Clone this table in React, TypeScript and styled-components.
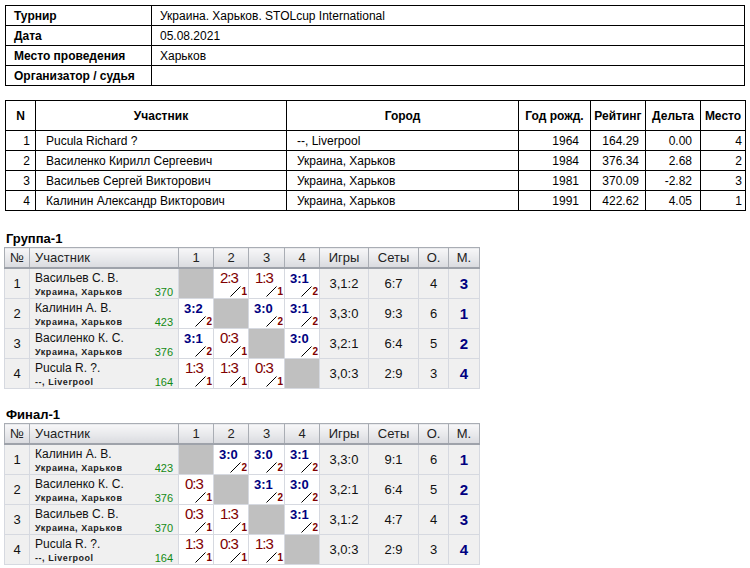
import React from "react";
import styled, { createGlobalStyle } from "styled-components";

const Global = createGlobalStyle`
  html, body { margin: 0; padding: 0; background: #fff; }
  body { padding: 5px 0 0 5px; font-family: "Liberation Sans", Arial, sans-serif; color: #000; }
`;

const Page = styled.div`
  display: flex;
  flex-direction: column;
  align-items: flex-start;
`;

const InfoTable = styled.table`
  border-collapse: collapse;
  width: 740px;
  table-layout: fixed;
  font-size: 12px;
  td {
    border: 1px solid #000;
    height: 19px;
    padding: 0 0 0 8px;
    white-space: nowrap;
  }
`;

const InfoLabel = styled.td`
  width: 137px;
  font-weight: bold;
`;

const MainTable = styled.table`
  margin-top: 14px;
  border-collapse: collapse;
  width: 740px;
  table-layout: fixed;
  font-size: 12px;
  th, td {
    border: 1px solid #000;
    white-space: nowrap;
  }
  th {
    height: 29px;
    font-weight: bold;
    text-align: center;
    padding: 0;
  }
  td {
    height: 19px;
    padding: 0 0 0 10px;
  }
`;

const NumCell = styled.td<{ $pr: number }>`
  && {
    text-align: right;
    padding: 0 ${(p) => p.$pr}px 0 0;
  }
`;

const SectionTitle = styled.div<{ $mt: number }>`
  margin-top: ${(p) => p.$mt}px;
  font-size: 13px;
  font-weight: bold;
  line-height: 16px;
  height: 16px;
  padding-left: 1px;
`;

const GroupTable = styled.table`
  margin-left: -1px;
  border-collapse: collapse;
  table-layout: fixed;
  width: 475px;
  font-size: 13px;
  color: #111;
  border: 1px solid #a9adb4;
`;

const Head = styled.th<{ $left?: boolean }>`
  height: 19px;
  padding: 0 0 0 ${(p) => (p.$left ? 5 : 0)}px;
  font-weight: normal;
  font-size: 13px;
  color: #222;
  text-align: ${(p) => (p.$left ? "left" : "center")};
  background: linear-gradient(#f7f7f8, #e6e7ea 60%, #d9dadf);
  border-right: 1px solid #a9adb4;
  border-bottom: 2px solid #9ea2aa;
`;

const Cell = styled.td`
  height: 29px;
  background: #f0f0f0;
  border: 1px solid #d6d9e0;
  text-align: center;
  padding: 0;
  vertical-align: middle;
  overflow: hidden;
`;

const NameCell = styled(Cell)`
  text-align: left;
  vertical-align: top;
`;

const NameBox = styled.div`
  height: 29px;
  overflow: hidden;
  display: grid;
  grid-template-rows: 16px 13px;
  padding: 0 5px;
`;

const Name = styled.div`
  font-size: 12px;
  line-height: 14px;
  padding-top: 2px;
  white-space: nowrap;
`;

const SubLine = styled.div`
  display: flex;
  justify-content: space-between;
  align-items: flex-end;
  height: 13px;
  line-height: 12px;
`;

const City = styled.span`
  font-size: 9px;
  font-weight: bold;
  letter-spacing: 0.55px;
  color: #222;
`;

const Rating = styled.span`
  font-size: 11px;
  color: #138a13;
`;

const EmptyCell = styled.td`
  background: #c0c0c0;
  border: 1px solid #d6d9e0;
  padding: 0;
`;

const ScoreCell = styled.td`
  background: #fff;
  border: 1px solid #d6d9e0;
  padding: 0;
  height: 29px;
  vertical-align: top;
  overflow: hidden;
`;

const ScoreBox = styled.div`
  display: grid;
  grid-template-rows: 16px 13px;
  height: 29px;
`;

const Score = styled.div<{ $win: boolean }>`
  padding: ${(p) => (p.$win ? "3px 0 0 5px" : "2px 0 0 6px")};
  line-height: 14px;
  font-size: ${(p) => (p.$win ? 13 : 15)}px;
  font-weight: ${(p) => (p.$win ? "bold" : "normal")};
  color: ${(p) => (p.$win ? "#000080" : "#800000")};
  letter-spacing: ${(p) => (p.$win ? 0 : -1)}px;
  white-space: nowrap;
`;

const Games = styled.div`
  display: flex;
  justify-content: flex-end;
  align-items: flex-end;
  padding: 0 1px 1px 0;
`;

const GameNum = styled.span`
  font-size: 10px;
  font-weight: bold;
  color: #800000;
  line-height: 10px;
`;

const Place = styled(Cell)`
  font-size: 15px;
  font-weight: bold;
  color: #000080;
`;

const Slash = () => (
  <svg width="11" height="11" viewBox="0 0 11 11" style={{ display: "block" }}>
    <line x1="0.5" y1="10.5" x2="10.5" y2="0.5" stroke="#000" strokeWidth="1" />
  </svg>
);

type Res = { s: string; g: number } | null;
type GRow = {
  n: number;
  name: string;
  city: string;
  rating: number;
  res: Res[];
  games: string;
  sets: string;
  pts: number;
  place: number;
};

const ScoreView = ({ r }: { r: Res }) => {
  if (!r) return <EmptyCell />;
  const [a, b] = r.s.split(":").map(Number);
  const win = a > b;
  return (
    <ScoreCell>
      <ScoreBox>
        <Score $win={win}>{r.s}</Score>
        <Games>
          <Slash />
          <GameNum>{r.g}</GameNum>
        </Games>
      </ScoreBox>
    </ScoreCell>
  );
};

const Group = ({ rows }: { rows: GRow[] }) => (
  <GroupTable>
    <colgroup>
      <col style={{ width: 25 }} />
      <col style={{ width: 149 }} />
      <col style={{ width: 35 }} />
      <col style={{ width: 35 }} />
      <col style={{ width: 36 }} />
      <col style={{ width: 35 }} />
      <col style={{ width: 49 }} />
      <col style={{ width: 50 }} />
      <col style={{ width: 30 }} />
      <col style={{ width: 31 }} />
    </colgroup>
    <thead>
      <tr>
        <Head>№</Head>
        <Head $left>Участник</Head>
        <Head>1</Head>
        <Head>2</Head>
        <Head>3</Head>
        <Head>4</Head>
        <Head>Игры</Head>
        <Head>Сеты</Head>
        <Head>О.</Head>
        <Head>М.</Head>
      </tr>
    </thead>
    <tbody>
      {rows.map((r) => (
        <tr key={r.n}>
          <Cell>{r.n}</Cell>
          <NameCell>
            <NameBox>
              <Name>{r.name}</Name>
              <SubLine>
                <City>{r.city}</City>
                <Rating>{r.rating}</Rating>
              </SubLine>
            </NameBox>
          </NameCell>
          {r.res.map((x, i) => (
            <ScoreView key={i} r={x} />
          ))}
          <Cell>{r.games}</Cell>
          <Cell>{r.sets}</Cell>
          <Cell>{r.pts}</Cell>
          <Place>{r.place}</Place>
        </tr>
      ))}
    </tbody>
  </GroupTable>
);

const group1: GRow[] = [
  { n: 1, name: "Васильев С. В.", city: "Украина, Харьков", rating: 370, res: [null, { s: "2:3", g: 1 }, { s: "1:3", g: 1 }, { s: "3:1", g: 2 }], games: "3,1:2", sets: "6:7", pts: 4, place: 3 },
  { n: 2, name: "Калинин А. В.", city: "Украина, Харьков", rating: 423, res: [{ s: "3:2", g: 2 }, null, { s: "3:0", g: 2 }, { s: "3:1", g: 2 }], games: "3,3:0", sets: "9:3", pts: 6, place: 1 },
  { n: 3, name: "Василенко К. С.", city: "Украина, Харьков", rating: 376, res: [{ s: "3:1", g: 2 }, { s: "0:3", g: 1 }, null, { s: "3:0", g: 2 }], games: "3,2:1", sets: "6:4", pts: 5, place: 2 },
  { n: 4, name: "Pucula R. ?.", city: "--, Liverpool", rating: 164, res: [{ s: "1:3", g: 1 }, { s: "1:3", g: 1 }, { s: "0:3", g: 1 }, null], games: "3,0:3", sets: "2:9", pts: 3, place: 4 },
];

const final1: GRow[] = [
  { n: 1, name: "Калинин А. В.", city: "Украина, Харьков", rating: 423, res: [null, { s: "3:0", g: 2 }, { s: "3:0", g: 2 }, { s: "3:1", g: 2 }], games: "3,3:0", sets: "9:1", pts: 6, place: 1 },
  { n: 2, name: "Василенко К. С.", city: "Украина, Харьков", rating: 376, res: [{ s: "0:3", g: 1 }, null, { s: "3:1", g: 2 }, { s: "3:0", g: 2 }], games: "3,2:1", sets: "6:4", pts: 5, place: 2 },
  { n: 3, name: "Васильев С. В.", city: "Украина, Харьков", rating: 370, res: [{ s: "0:3", g: 1 }, { s: "1:3", g: 1 }, null, { s: "3:1", g: 2 }], games: "3,1:2", sets: "4:7", pts: 4, place: 3 },
  { n: 4, name: "Pucula R. ?.", city: "--, Liverpool", rating: 164, res: [{ s: "1:3", g: 1 }, { s: "0:3", g: 1 }, { s: "1:3", g: 1 }, null], games: "3,0:3", sets: "2:9", pts: 3, place: 4 },
];

const players = [
  { n: 1, name: "Pucula Richard ?", city: "--, Liverpool", year: 1964, rating: "164.29", delta: "0.00", place: 4 },
  { n: 2, name: "Василенко Кирилл Сергеевич", city: "Украина, Харьков", year: 1984, rating: "376.34", delta: "2.68", place: 2 },
  { n: 3, name: "Васильев Сергей Викторович", city: "Украина, Харьков", year: 1981, rating: "370.09", delta: "-2.82", place: 3 },
  { n: 4, name: "Калинин Александр Викторович", city: "Украина, Харьков", year: 1991, rating: "422.62", delta: "4.05", place: 1 },
];

export default function App() {
  return (
    <Page>
      <Global />
      <InfoTable>
        <tbody>
          <tr>
            <InfoLabel>Турнир</InfoLabel>
            <td>Украина. Харьков. STOLcup International</td>
          </tr>
          <tr>
            <InfoLabel>Дата</InfoLabel>
            <td>05.08.2021</td>
          </tr>
          <tr>
            <InfoLabel>Место проведения</InfoLabel>
            <td>Харьков</td>
          </tr>
          <tr>
            <InfoLabel>Организатор / судья</InfoLabel>
            <td></td>
          </tr>
        </tbody>
      </InfoTable>

      <MainTable>
        <colgroup>
          <col style={{ width: 30 }} />
          <col style={{ width: 251 }} />
          <col style={{ width: 232 }} />
          <col style={{ width: 72 }} />
          <col style={{ width: 55 }} />
          <col style={{ width: 55 }} />
          <col style={{ width: 45 }} />
        </colgroup>
        <thead>
          <tr>
            <th>N</th>
            <th>Участник</th>
            <th>Город</th>
            <th>Год рожд.</th>
            <th>Рейтинг</th>
            <th>Дельта</th>
            <th>Место</th>
          </tr>
        </thead>
        <tbody>
          {players.map((p) => (
            <tr key={p.n}>
              <NumCell $pr={5}>{p.n}</NumCell>
              <td>{p.name}</td>
              <td>{p.city}</td>
              <NumCell $pr={11}>{p.year}</NumCell>
              <NumCell $pr={6}>{p.rating}</NumCell>
              <NumCell $pr={8}>{p.delta}</NumCell>
              <NumCell $pr={3}>{p.place}</NumCell>
            </tr>
          ))}
        </tbody>
      </MainTable>

      <SectionTitle $mt={20}>Группа-1</SectionTitle>
      <Group rows={group1} />

      <SectionTitle $mt={18}>Финал-1</SectionTitle>
      <Group rows={final1} />
    </Page>
  );
}
